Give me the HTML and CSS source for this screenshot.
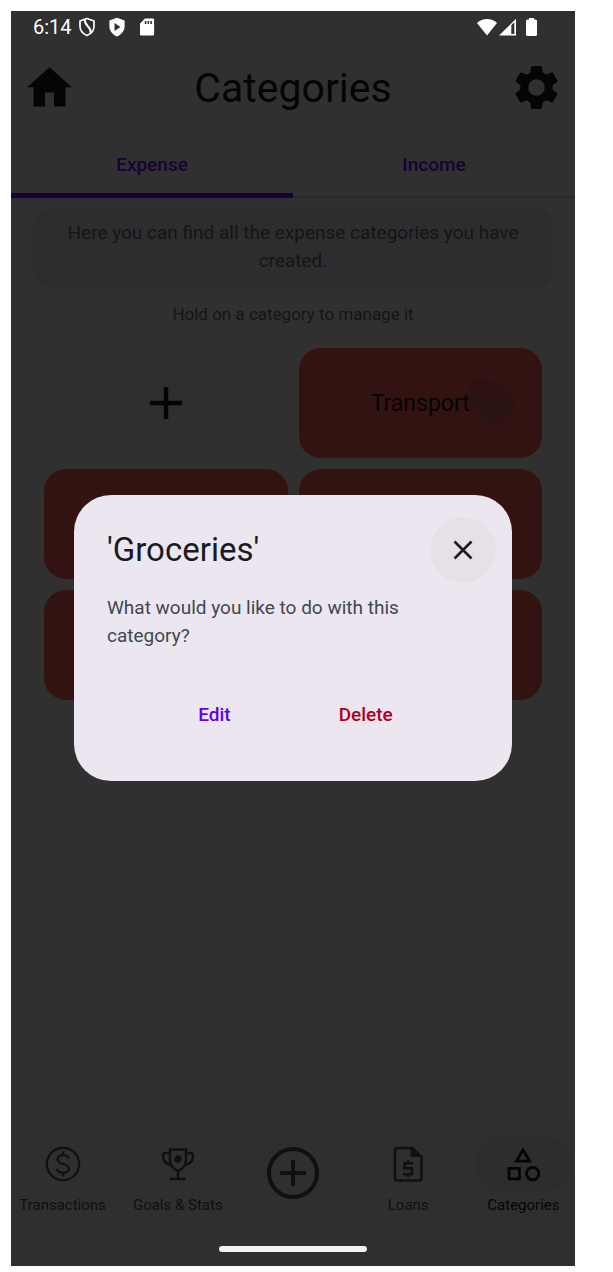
FILE: index.html
```html
<!DOCTYPE html>
<html lang="en">
<head>
<meta charset="utf-8">
<meta name="viewport" content="width=device-width, initial-scale=1">
<title>Categories</title>
<link rel="stylesheet" href="styles.css">
</head>
<body>
<div class="screen">
  <div class="status">
    <div class="status-group">
      <span class="clock">6:14</span>
      <svg class="status-icon" viewBox="0 0 20 20"><path d="M10 1.500 17 4v5.200c0 4.200-2.800 7.500-7 9.300-4.200-1.800-7-5.100-7-9.300V4z" fill="none" stroke="currentColor" stroke-width="1.700"/><path d="M7.800 2.500C7.300 9.500 14.500 9 13.600 16" fill="none" stroke="currentColor" stroke-width="2"/></svg>
      <svg class="status-icon" viewBox="0 0 20 20"><path d="M10 .8 17.600 3.600v5.600c0 4.600-3 8.300-7.600 10.200-4.600-1.900-7.600-5.600-7.600-10.200V3.600zM7.500 6v8l6-4z" fill="currentColor" fill-rule="evenodd"/></svg>
      <svg class="status-icon" viewBox="0 0 20 20"><path d="M8 1.500h7.800a1.300 1.300 0 0 1 1.300 1.300v14.400a1.300 1.300 0 0 1-1.300 1.300H4.300A1.300 1.300 0 0 1 3 17.200V6.500zM7.800 4v3h1.600V4zm2.800 0v3h1.500V4zm2.700 0v3h1.600V4z" fill="currentColor" fill-rule="evenodd"/></svg>
    </div>
    <div class="status-group signals">
      <svg class="wifi" viewBox="0 0 20 18"><path d="M10 17.500 0 5C5.500-.2 14.500-.2 20 5z" fill="currentColor"/></svg>
      <svg class="cell" viewBox="0 0 17 18"><path d="M0 17.500 17 .8v16.700zM12.300 7.200v8.800h3V4.300z" fill="currentColor" fill-rule="evenodd"/></svg>
      <svg class="battery" viewBox="0 0 11 18"><path d="M3 0h5v1.500h1.500A1.500 1.500 0 0 1 11 3v13.500a1.500 1.500 0 0 1-1.500 1.500h-8A1.500 1.500 0 0 1 0 16.500V3a1.500 1.500 0 0 1 1.500-1.500H3z" fill="currentColor"/></svg>
    </div>
  </div>

  <header class="topbar">
    <button class="icon-button" type="button" aria-label="Home"><svg viewBox="2 2 20 20"><path d="M10 20.400v-6.200h4v6.200h5.100v-8.500H22L12 3 2 11.900h2.900v8.500z" fill="currentColor"/></svg></button>
    <h1 class="title">Categories</h1>
    <button class="icon-button" type="button" aria-label="Settings"><svg viewBox="2 2 20 20"><path d="M19.140 12.940c.04-.3.060-.61.060-.94 0-.32-.02-.64-.07-.94l2.030-1.580a.49.49 0 0 0 .12-.61l-1.920-3.320a.488.488 0 0 0-.59-.22l-2.390.96c-.5-.38-1.030-.7-1.620-.94l-.36-2.540a.484.484 0 0 0-.48-.41h-3.840c-.24 0-.43.170-.47.410l-.36 2.540c-.59.240-1.130.57-1.620.94l-2.390-.96c-.22-.08-.47 0-.59.220L2.740 8.870c-.12.210-.08.470.12.610l2.030 1.580c-.05.300-.09.630-.09.940s.02.640.07.940l-2.030 1.580a.49.49 0 0 0-.12.610l1.920 3.320c.12.220.37.290.59.220l2.390-.96c.5.380 1.030.7 1.620.94l.36 2.540c.05.240.24.410.48.410h3.840c.24 0 .44-.17.470-.41l.36-2.540c.59-.24 1.130-.56 1.620-.94l2.390.96c.22.080.47 0 .59-.22l1.920-3.320c.12-.22.070-.47-.12-.61zM12 15.700a3.700 3.700 0 1 1 0-7.400 3.700 3.700 0 0 1 0 7.400z" fill="currentColor"/></svg></button>
  </header>

  <div class="tabs" role="tablist">
    <button class="tab tab-active" type="button" role="tab" aria-selected="true">Expense</button>
    <button class="tab" type="button" role="tab" aria-selected="false">Income</button>
  </div>

  <main class="content">
    <p class="info">Here you can find all the expense categories you have created.</p>
    <p class="hint">Hold on a category to manage it</p>
    <div class="grid">
      <button class="card card-add" type="button" aria-label="Add category"><svg class="plus" viewBox="0 0 32 32"><path d="M16 0v32M0 16h32" stroke="currentColor" stroke-width="4.500"/></svg></button>
      <button class="card" type="button">Transport<svg class="tag" viewBox="0 0 24 24"><path d="m21.400 11.600-9-9C12 2.200 11.500 2 11 2H4c-1.100 0-2 .9-2 2v7c0 .55.220 1.050.59 1.420l9 9c.36.360.86.580 1.410.580s1.050-.22 1.410-.59l7-7c.37-.36.590-.86.590-1.410s-.23-1.060-.6-1.400zM6.500 8.300a1.800 1.800 0 1 1 0-3.600 1.800 1.800 0 0 1 0 3.600z" fill="currentColor"/></svg></button>
      <button class="card" type="button" aria-label="Category"></button>
      <button class="card" type="button" aria-label="Category"></button>
      <button class="card" type="button" aria-label="Category"></button>
      <button class="card" type="button" aria-label="Category"></button>
    </div>
  </main>

  <footer class="bottom">
    <nav class="nav">
      <a class="nav-item" href="#transactions"><span class="pill"><svg viewBox="0 0 36 36" fill="none" stroke="currentColor" stroke-width="2.200"><circle cx="18" cy="18" r="16.200"/><path d="M23.500 12.500c-.5-2-2.700-3.300-5.500-3.300-3.200 0-5.500 1.600-5.500 4.200 0 6 11.500 3.200 11.500 9.100 0 2.700-2.500 4.400-5.900 4.400-3.300 0-5.600-1.600-6.100-4.200M18 5.500v4M18 26.500v4"/></svg></span>Transactions</a>
      <a class="nav-item" href="#goals"><span class="pill"><svg viewBox="0 0 36 36" fill="none" stroke="currentColor" stroke-width="2.400"><path d="M10 3.500h16V14c0 6-3 9-8 11-5-2-8-5-8-11zM10 7H5.500C3 7 3 8 3 10c0 5 3 8 8 9M26 7h4.500C33 7 33 8 33 10c0 5-3 8-8 9M18 25v8M10 33h16"/><circle cx="18" cy="13" r="3.800" fill="currentColor" stroke="none"/></svg></span>Goals &amp; Stats</a>
      <a class="nav-item nav-add" href="#add" aria-label="Add"><svg viewBox="0 0 52 52" fill="none" stroke="currentColor" stroke-width="4"><circle cx="26" cy="26" r="24"/><path d="M26 13v26M13 26h26"/></svg></a>
      <a class="nav-item" href="#loans"><span class="pill"><svg viewBox="0 0 36 36" fill="none" stroke="currentColor" stroke-width="2.400"><path d="M22.500 2H7a2 2 0 0 0-2 2v28.500a2 2 0 0 0 2 2h22.500a2 2 0 0 0 2-2V11z"/><path d="M20.500 1.500v9.500h10.500z" fill="currentColor" stroke="none"/><path d="M23 17.200h-8.500v5h7.500v6h-9M18.200 14v3M18.200 28v3"/></svg></span>Loans</a>
      <a class="nav-item nav-active" href="#categories" aria-current="page"><span class="pill"><svg viewBox="0 0 36 36" fill="none" stroke="currentColor" stroke-width="2.800"><path d="m18 4-6.700 11.200h13.400zM4 22.400h10.400v10.400H4z"/><circle cx="27.700" cy="27.600" r="6.200"/></svg></span>Categories</a>
    </nav>
    <div class="home-handle"></div>
  </footer>

  <div class="overlay">
    <section class="dialog" role="dialog" aria-modal="true" aria-labelledby="dialog-title">
      <div class="dialog-head">
        <h2 class="dialog-title" id="dialog-title">'Groceries'</h2>
        <button class="close" type="button" aria-label="Close"><svg viewBox="0 0 20 20"><path d="m1.500 1.500 17 17M18.500 1.500l-17 17" stroke="currentColor" stroke-width="2.600"/></svg></button>
      </div>
      <p class="dialog-text">What would you like to do with this category?</p>
      <div class="actions">
        <button class="action edit" type="button">Edit</button>
        <button class="action delete" type="button">Delete</button>
      </div>
    </section>
  </div>
</div>
</body>
</html>
```

FILE: styles.css
```css
* {
  box-sizing: border-box;
}

body {
  margin: 0;
  padding: 11px 38px 6px 11px;
  min-height: 100vh;
  display: flex;
  background: #fff;
  font-family: Roboto, "Liberation Sans", sans-serif;
}

h1,
h2,
p {
  margin: 0;
  font-weight: 400;
}

button {
  margin: 0;
  padding: 0;
  border: 0;
  background: none;
  color: inherit;
  font: inherit;
}

svg {
  display: block;
}

.screen {
  position: relative;
  flex: 1;
  min-width: 0;
  display: flex;
  flex-direction: column;
  overflow: hidden;
  background: #303030;
  color: #050505;
}

.status {
  display: flex;
  justify-content: space-between;
  height: 32px;
  padding: 0 38px 0 22px;
  color: #fff;
}

.status-group {
  display: flex;
  align-items: center;
  gap: 10px;
}

.clock {
  font-size: 20px;
  margin-right: -5px;
}

.status-icon {
  width: 20px;
  height: 20px;
}

.signals {
  gap: 2px;
}

.wifi {
  width: 20px;
  height: 18px;
}

.cell {
  width: 17px;
  height: 18px;
}

.battery {
  width: 11px;
  height: 18px;
  margin-left: 8px;
}

.topbar {
  display: flex;
  align-items: center;
  justify-content: space-between;
  height: 89px;
  padding: 0 16px;
}

.icon-button svg {
  width: 45px;
  height: 45px;
}

.title {
  font-size: 41px;
  line-height: 48px;
}

.tabs {
  display: grid;
  grid-template-columns: 1fr 1fr;
  height: 66px;
  box-shadow: inset 0 -2px #29282b;
}

.tab {
  padding-top: 3px;
  color: #190038;
  font-size: 19px;
  font-weight: 500;
  border-bottom: 5px solid transparent;
}

.tab-active {
  border-color: #190038;
}

.content {
  flex: 1;
  padding: 11px 22px;
  text-align: center;
}

.info {
  padding: 10px 24px 12px;
  border-radius: 16px;
  background: #2c2d2f;
  color: #151515;
  font-size: 19px;
  line-height: 28px;
}

.hint {
  padding: 16px 0 23px;
  color: #151515;
  font-size: 17px;
  line-height: 22px;
}

.grid {
  display: grid;
  grid-template-columns: 1fr 1fr;
  gap: 11px;
  padding: 0 11px;
}

.card {
  position: relative;
  height: 110px;
  border-radius: 22px;
  background: #321311;
  font-size: 23px;
}

.card-add {
  display: grid;
  place-items: center;
  background: #2f2f2f;
}

.plus {
  width: 32px;
  height: 32px;
}

.tag {
  position: absolute;
  top: 50%;
  right: 22px;
  width: 56px;
  height: 56px;
  margin-top: -28px;
  color: #2a1312;
}

.bottom {
  padding: 14px 0;
  background: #2f2f2f;
}

.nav {
  display: grid;
  grid-template-columns: repeat(5, minmax(0, 1fr));
  margin: 0 -6px;
}

.nav-item {
  display: flex;
  flex-direction: column;
  align-items: center;
  gap: 4px;
  color: #101010;
  font-size: 15px;
  line-height: 20px;
  text-decoration: none;
  white-space: nowrap;
}

.pill {
  display: grid;
  place-items: center;
  width: 96px;
  height: 54px;
  border-radius: 27px;
}

.pill svg {
  width: 36px;
  height: 36px;
}

.nav-active {
  color: #050505;
}

.nav-active .pill {
  background: #2c2d2f;
}

.nav-add svg {
  width: 52px;
  height: 52px;
  margin-top: 10px;
}

.home-handle {
  width: 148px;
  height: 6px;
  margin: 31px auto 0;
  border-radius: 3px;
  background: #f2f2f2;
}

.overlay {
  position: absolute;
  inset: 0;
  display: grid;
  align-items: center;
  padding: 0 63px 2px;
}

.dialog {
  padding: 22px 28px 44px 33px;
  border-radius: 37px;
  background: #ece6f0;
  color: #191c1e;
}

.dialog-head {
  display: flex;
  align-items: center;
  justify-content: space-between;
  margin-right: -12px;
}

.dialog-title {
  font-size: 33px;
  line-height: 44px;
}

.close {
  display: grid;
  place-items: center;
  width: 66px;
  height: 66px;
  border-radius: 50%;
  background: #e6e1e6;
}

.close svg {
  width: 20px;
  height: 20px;
}

.dialog-text {
  margin-top: 11px;
  max-width: 340px;
  color: #41484d;
  font-size: 19px;
  line-height: 28px;
}

.actions {
  display: flex;
  justify-content: center;
  gap: 84px;
  margin-top: 43px;
}

.action {
  height: 44px;
  padding: 0 12px;
  font-size: 19px;
  font-weight: 500;
}

.edit {
  color: #6200ee;
}

.delete {
  color: #b00020;
}
```
